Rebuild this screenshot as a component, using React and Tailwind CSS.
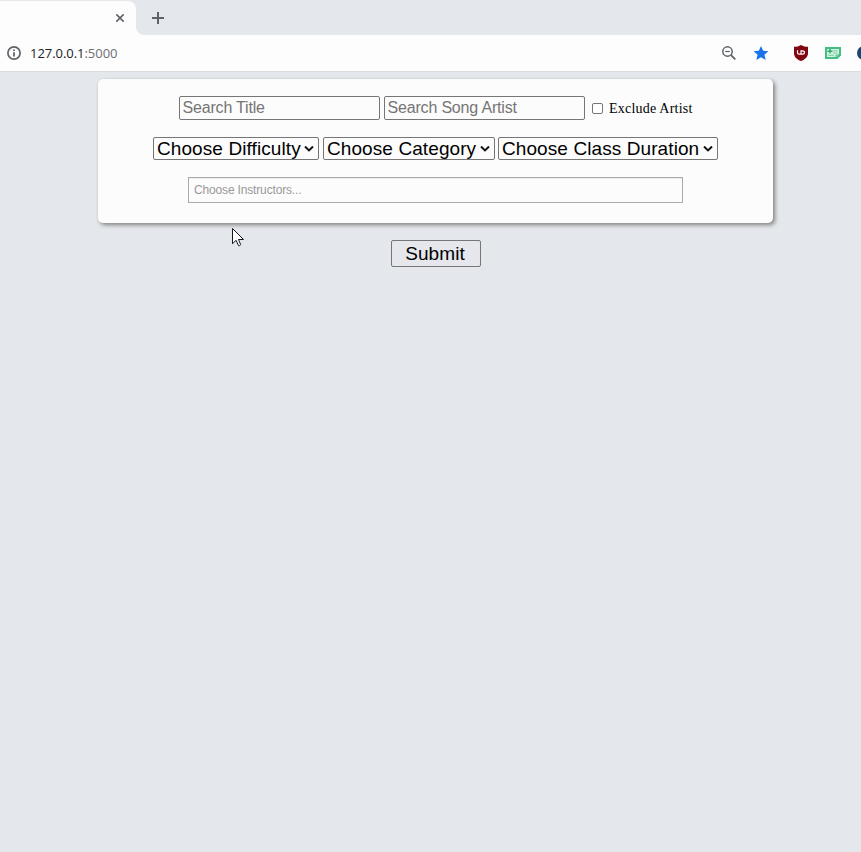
import React from "react";

const Caret = () => (
  <svg className="h-[6px] w-[10px] shrink-0" viewBox="0 0 10 6" fill="none" stroke="#111" strokeWidth="2">
    <path d="M1 .5l4 3.900L9 .5" />
  </svg>
);

function Select({ label, className }) {
  return (
    <button className={`flex h-[23px] items-center justify-between rounded-[2px] border border-[#767676] bg-[#fcfcfc] pl-[3px] pr-[4px] text-[19px] leading-[21px] tracking-[0.09px] whitespace-nowrap text-black ${className}`}>
      <span>{label}</span>
      <Caret />
    </button>
  );
}

function TabStrip() {
  return (
    <div className="flex h-[35px] bg-[#e4e7eb]">
      <div className="mt-px flex h-[34px] w-[136px] items-center justify-end rounded-tr-[8px] bg-[#fdfdfd] pr-[12px]">
        <svg className="h-[8px] w-[8px]" viewBox="0 0 8 8" stroke="#5f6368" strokeWidth="1.6">
          <path d="M0.3 0.3l7.4 7.4M7.7 0.3L0.3 7.7" />
        </svg>
      </div>
      <svg className="h-[8px] w-[8px] self-end" viewBox="0 0 8 8" fill="#fdfdfd">
        <path d="M0 0a8 8 0 0 0 8 8H0z" />
      </svg>
      <svg className="mt-[12px] ml-[8px] h-[12px] w-[12px]" viewBox="0 0 12 12" stroke="#5f6368" strokeWidth="2">
        <path d="M6 0v12M0 6h12" />
      </svg>
    </div>
  );
}

function Toolbar() {
  return (
    <div className="flex h-[37px] items-center overflow-hidden border-b border-[#dadce0] bg-[#fdfdfd] pl-[7px]">
      <svg className="h-[14px] w-[14px]" viewBox="0 0 14 14" fill="none" stroke="#5f6368" strokeWidth="1.7">
        <circle cx="7" cy="7" r="6.1" />
        <path d="M7 6.2v4.2M7 3.4v1.6" strokeWidth="1.8" />
      </svg>
      <span className="mt-px ml-[9px] font-['Open_Sans','Noto_Sans',sans-serif] text-[13px] tracking-[-0.04px] text-[#202124]">
        127.0.0.1<span className="text-[#6b6f74]">:5000</span>
      </span>
      <div className="ml-auto flex w-[139px] shrink-0 items-center">
        <svg className="h-[14px] w-[14px] shrink-0" viewBox="0 0 14 14" fill="none" stroke="#5f6368" strokeWidth="1.5">
          <circle cx="5.500" cy="5.500" r="4.700" />
          <path d="M3.200 5.500h4.600" strokeWidth="1.2" />
          <path d="M8.800 8.800l4.500 4.500" strokeWidth="1.9" />
        </svg>
        <svg className="ml-[17px] h-[14px] w-[16px] shrink-0" viewBox="0 0 16 15" preserveAspectRatio="none" fill="#1a73e8">
          <path d="M8 0l2.200 5.200 5.200.4-4 3.800L12.700 15 8 12l-4.700 3 1.300-5.600L.6 5.600l5.200-.4z" />
        </svg>
        <svg className="ml-[25px] h-[16px] w-[14px] shrink-0" viewBox="0 0 14 16">
          <path d="M7 0c2 1.4 4.5 1.8 7 1.8V8c0 4-3 6.500-7 8C3 14.500 0 12 0 8V1.800C2.500 1.800 5 1.400 7 0z" fill="#800610" />
          <path d="M3.500 5.300v2.400q0 1.500 1.500 1.500h2V5.800h1.500q2 0 2 1.700T8.500 9.200H7" fill="none" stroke="#fff" strokeWidth="1.200" />
        </svg>
        <svg className="ml-[17px] h-[12px] w-[16px] shrink-0" viewBox="0 0 16 12" fill="none" stroke="#43be80">
          <path d="M1 1h14v7l-3 3H1z" fill="#d5f2e3" strokeWidth="2" />
          <path d="M5 2v4.500M2.500 4.300h5" stroke="#25ad69" strokeWidth="1.400" />
          <path d="M8.500 3.800h4M8 6h4.500M3 8.300h6" stroke="#74cfa0" strokeWidth="1" />
          <path d="M11 11V8h4" stroke="#43be80" strokeWidth="1" />
        </svg>
        <div className="ml-[16px] h-[14px] w-[14px] shrink-0 rounded-full bg-[#174778]" />
      </div>
    </div>
  );
}

export default function App() {
  return (
    <div className="relative h-[852px] w-[861px] overflow-hidden bg-[#e4e7eb] font-['Liberation_Sans',sans-serif]">
      <TabStrip />
      <Toolbar />
      <main className="flex flex-col pt-[7px]">
        <section className="ml-[98px] flex h-[144px] w-[675px] flex-col rounded-[5px] bg-[#fcfcfc] pt-[17px] shadow-[2px_2px_4px_#808080]">
          <div className="ml-[81px] flex items-center">
            <input aria-label="Search Title" placeholder="Search Title" className="h-[24px] w-[201px] rounded-[2px] border border-[#767676] bg-[#fcfcfc] px-[2.500px] pb-px text-[16px] tracking-[-0.18px] placeholder:text-[#757575]" />
            <input aria-label="Search Song Artist" placeholder="Search Song Artist" className="ml-[4px] h-[24px] w-[201px] rounded-[2px] border border-[#767676] bg-[#fcfcfc] px-[2.500px] pb-px text-[16px] tracking-[-0.18px] placeholder:text-[#757575]" />
            <label className="ml-[7px] flex items-center font-['Liberation_Serif',serif] text-[14px] leading-[16px] tracking-[0.22px] text-black">
              <input type="checkbox" className="mr-[6px] h-[11px] w-[11px] appearance-none rounded-[2px] border border-[#767676] bg-white" />
              <span className="pt-[2px]">Exclude Artist</span>
            </label>
          </div>
          <div className="mt-[17px] ml-[55px] flex">
            <Select label="Choose Difficulty" className="w-[166px]" />
            <Select label="Choose Category" className="ml-[4px] w-[172px]" />
            <Select label="Choose Class Duration" className="ml-[3px] w-[220px]" />
          </div>
          <input aria-label="Choose Instructors" placeholder="Choose Instructors..." className="mt-[17px] ml-[90px] h-[26px] w-[495px] border border-[#aaa] bg-[linear-gradient(#eeeeee_1px,#fcfcfc_1px)] px-[5px] text-[12px] tracking-[-0.16px] placeholder:text-[#999]" />
        </section>
        <button className="mt-[17px] ml-[391px] h-[27px] w-[90px] rounded-[2px] border border-[#767676] bg-[#e5e7ec] pr-[2px] text-[19px] leading-[25px] tracking-[0.08px] text-black">
          Submit
        </button>
      </main>
      <svg className="absolute top-[227px] left-[232px] h-[20px] w-[13px]" viewBox="0 0 13 20">
        <path d="M.5 1.500v15.200l3.600-3.400 2.400 5.300q1.300.6 2.200-.9L6.500 12.500h5z" fill="#fff" stroke="#15152b" />
      </svg>
    </div>
  );
}
